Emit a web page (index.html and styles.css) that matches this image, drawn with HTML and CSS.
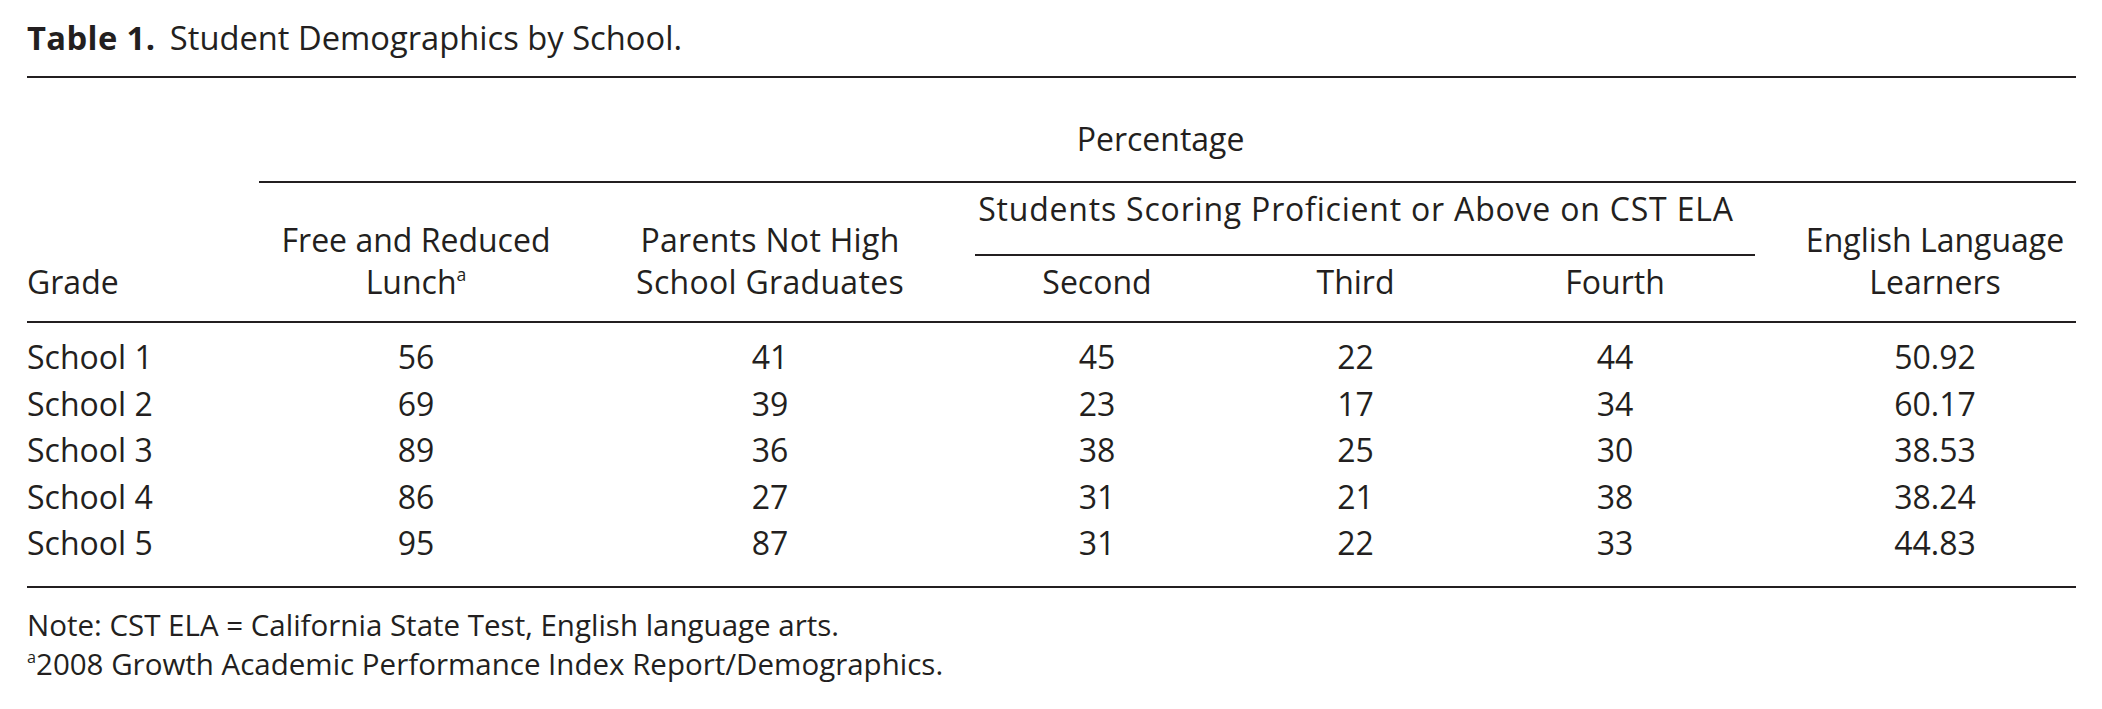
FILE: index.html
```html
<!DOCTYPE html>
<html lang="en">
<head>
<meta charset="utf-8">
<title>Table 1. Student Demographics by School.</title>
<link rel="stylesheet" href="styles.css">
</head>
<body>
<div class="page">
  <div class="caption"><span class="label">Table 1.</span> Student Demographics by School.</div>
  <table class="data">
    <colgroup>
      <col class="c-grade">
      <col class="c-lunch">
      <col class="c-parents">
      <col class="c-second">
      <col class="c-third">
      <col class="c-fourth">
      <col class="c-ell">
    </colgroup>
    <thead>
      <tr class="h1">
        <th class="blank"></th>
        <th class="pct" colspan="6">Percentage</th>
      </tr>
      <tr class="h2">
        <th class="grade" rowspan="2">Grade</th>
        <th class="multi" rowspan="2">Free and Reduced<br>Lunch<sup>a</sup></th>
        <th class="multi parents" rowspan="2">Parents Not High<br>School Graduates</th>
        <th class="span" colspan="3"><div class="span-rule">Students Scoring Proficient or Above on CST ELA</div></th>
        <th class="multi ell" rowspan="2">English Language<br>Learners</th>
      </tr>
      <tr class="h3">
        <th class="sub">Second</th>
        <th class="sub">Third</th>
        <th class="sub">Fourth</th>
      </tr>
    </thead>
    <tbody>
      <tr class="first"><td class="name">School 1</td><td>56</td><td>41</td><td>45</td><td>22</td><td>44</td><td class="ell">50.92</td></tr>
      <tr><td class="name">School 2</td><td>69</td><td>39</td><td>23</td><td>17</td><td>34</td><td class="ell">60.17</td></tr>
      <tr><td class="name">School 3</td><td>89</td><td>36</td><td>38</td><td>25</td><td>30</td><td class="ell">38.53</td></tr>
      <tr><td class="name">School 4</td><td>86</td><td>27</td><td>31</td><td>21</td><td>38</td><td class="ell">38.24</td></tr>
      <tr class="last"><td class="name">School 5</td><td>95</td><td>87</td><td>31</td><td>22</td><td>33</td><td class="ell">44.83</td></tr>
    </tbody>
  </table>
  <div class="notes">
    <p>Note: CST ELA = California State Test, English language arts.</p>
    <p><sup>a</sup>2008 Growth Academic Performance Index Report/Demographics.</p>
  </div>
</div>
</body>
</html>
```

FILE: styles.css
```css
html, body {
  margin: 0;
  padding: 0;
  background: #ffffff;
}

body {
  font-family: "Open Sans", Lato, "Liberation Sans", sans-serif;
  font-size: 32px;
  color: #231f20;
}

.page {
  width: 2049px;
  padding: 0 26px 0 27px;
}

.caption {
  font-size: 32.7px;
  line-height: 42px;
  padding: 17px 0 17px 0;
  border-bottom: 2px solid #231f20;
  white-space: nowrap;
}

.caption .label {
  font-weight: 700;
  margin-right: 6px;
  letter-spacing: 0.4px;
}

.data {
  width: 2049px;
  table-layout: fixed;
  border-collapse: collapse;
  border-spacing: 0;
}

.c-grade { width: 232px; }
.c-lunch { width: 314px; }
.c-parents { width: 394px; }
.c-second { width: 260px; }
.c-third { width: 257px; }
.c-fourth { width: 262px; }
.c-ell { width: 330px; }

.data th,
.data td {
  padding: 0;
  font-weight: 400;
  text-align: center;
  white-space: nowrap;
}

.data thead th {
  line-height: 42px;
}

.h1 th {
  padding-top: 40px;
  padding-bottom: 21px;
}

.h1 .pct {
  border-bottom: 2px solid #231f20;
  padding-right: 14px;
}

.h2 .span {
  padding-top: 5px;
  vertical-align: top;
}

.span-rule {
  margin: 0 -9px 0 8px;
  padding: 0 18px 24px 0;
  border-bottom: 2px solid #231f20;
  letter-spacing: 0.8px;
}

.h2 .multi,
.h2 .grade,
.h3 .sub {
  vertical-align: bottom;
  padding-bottom: 18px;
}

.h2 .parents {
  letter-spacing: 0.3px;
}

.h3 .sub {
  padding-top: 5px;
}

.h2 .grade {
  text-align: left;
}

.data thead tr.h3 th,
.data thead tr.h2 th[rowspan] {
  border-bottom: 2px solid #231f20;
}

.data .ell {
  padding-left: 48px;
}

.data sup,
.notes sup {
  font-size: 0.55em;
  line-height: 0;
  vertical-align: 0.75em;
}

.data tbody td {
  line-height: 46.5px;
}

.data tbody td.name {
  text-align: left;
}

.data tbody tr.first td {
  padding-top: 11px;
}

.data tbody tr.last td {
  padding-bottom: 19px;
  border-bottom: 2px solid #231f20;
}

.notes {
  padding-top: 17px;
  font-size: 29.5px;
}

.notes p {
  margin: 0;
  line-height: 39px;
  white-space: nowrap;
}
```
